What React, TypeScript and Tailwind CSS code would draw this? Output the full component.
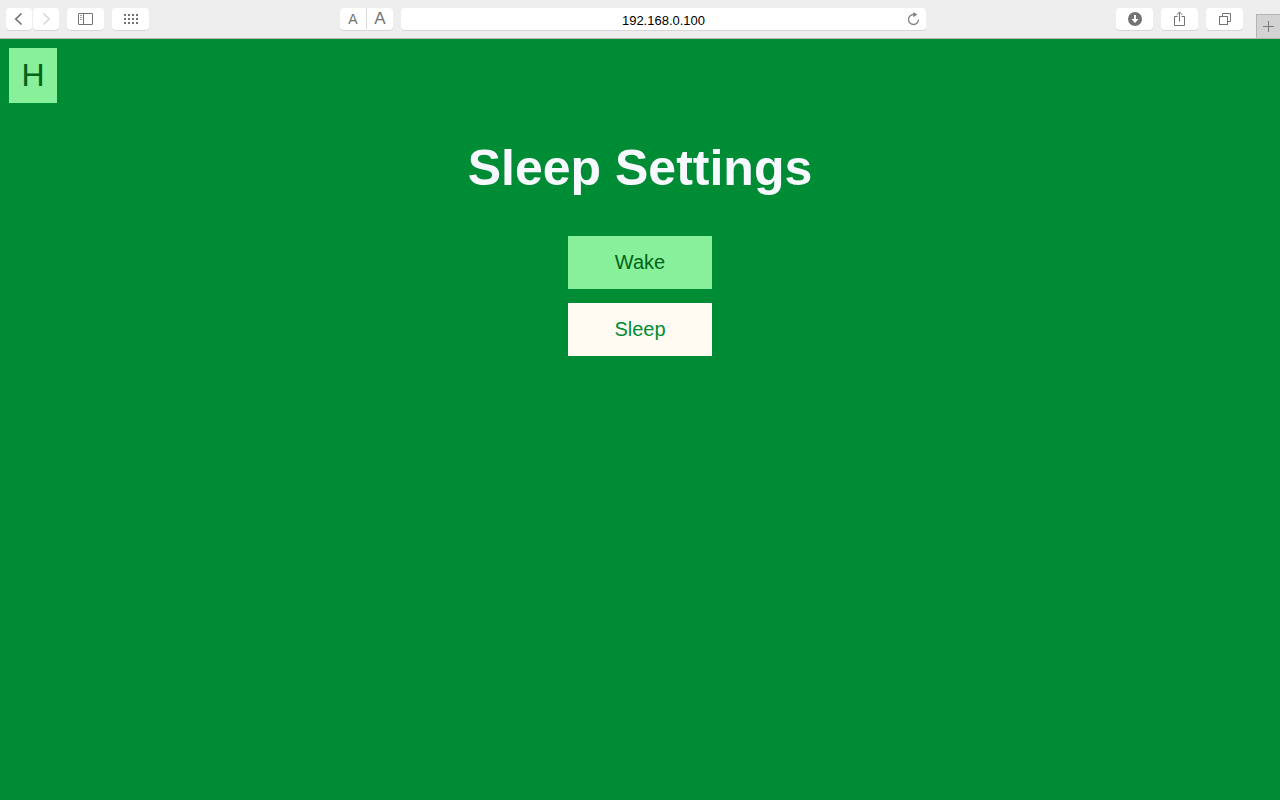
import React, { useState } from 'react'

const toolButton =
  'flex h-[22px] items-center justify-center bg-white text-[#737373] shadow-[0_1px_0_#d6d6d6]'

const Toolbar = () => {
  const [address, setAddress] = useState('192.168.0.100')

  return (
    <header className="grid h-[39px] grid-cols-[340px_1fr_354px] border-b border-[#b4b4b4] bg-[#eeeeee]">
      <div className="flex items-start gap-2 pl-1.5 pt-2">
        <div className="flex gap-px">
          <button aria-label="Back" className={`${toolButton} w-[26px] rounded`}>
            <svg width="26" height="22" viewBox="0 0 26 22" fill="none" stroke="currentColor" strokeWidth="1.7">
              <path d="M15.5 5.5 9.8 11l5.7 5.5" />
            </svg>
          </button>
          <button aria-label="Forward" disabled className={`${toolButton} w-[26px] rounded`}>
            <svg width="26" height="22" viewBox="0 0 26 22" fill="none" stroke="#d9d9d9" strokeWidth="1.7">
              <path d="m10.5 5.5 5.7 5.5-5.7 5.5" />
            </svg>
          </button>
        </div>
        <button aria-label="Show sidebar" className={`${toolButton} w-[37px] rounded`}>
          <svg width="37" height="22" viewBox="0 0 37 22" fill="none" stroke="currentColor">
            <rect x="11.5" y="5.5" width="14" height="11" rx="0.5" />
            <path d="M16.5 5.5v11" />
            <path d="M13 7.5h2M13 9.5h2M13 11.5h2" strokeOpacity="0.7" />
          </svg>
        </button>
        <button aria-label="Top sites" className={`${toolButton} w-[37px] rounded`}>
          <svg width="37" height="22" viewBox="0 0 37 22" fill="none" stroke="currentColor" strokeWidth="2">
            <path d="M12 7h14M12 11h14M12 15h14" strokeDasharray="2 2" />
          </svg>
        </button>
      </div>

      <div className="flex items-start gap-2 pt-2">
        <div className="flex gap-px rounded bg-[#dddddd]">
          <button aria-label="Smaller text" className={`${toolButton} w-[26px] rounded-l text-[14px]`}>
            A
          </button>
          <button aria-label="Larger text" className={`${toolButton} w-[26px] rounded-r text-[17px]`}>
            A
          </button>
        </div>
        <div className="flex h-[22px] flex-1 items-center rounded bg-white pl-[26px] shadow-[0_1px_0_#d6d6d6]">
          <input
            type="text"
            aria-label="Address"
            value={address}
            onChange={(e) => setAddress(e.target.value)}
            className="h-[22px] min-w-0 flex-1 bg-transparent pt-0.5 text-center text-[13px] leading-5 text-black outline-none"
          />
          <button aria-label="Reload" className="h-[22px] w-[26px] text-[#808080]">
            <svg width="26" height="22" viewBox="0 0 26 22" fill="none" stroke="currentColor" strokeWidth="1.3">
              <path d="M15 6.5h-1.5a5 5 0 1 0 5 5" />
              <path d="M13.3 4v5.2l4-2.6z" fill="currentColor" stroke="none" />
            </svg>
          </button>
        </div>
      </div>

      <div className="flex items-start justify-end">
        <div className="mr-[13px] flex gap-2 pt-2">
          <button aria-label="Downloads" className={`${toolButton} w-[37px] rounded`}>
            <svg width="37" height="22" viewBox="0 0 37 22" fill="none">
              <circle cx="19" cy="11" r="7" fill="currentColor" />
              <path d="M18 7h2v4h2.5L19 15l-3.5-4H18z" fill="white" />
            </svg>
          </button>
          <button aria-label="Share" className={`${toolButton} w-[37px] rounded`}>
            <svg width="37" height="22" viewBox="0 0 37 22" fill="none" stroke="currentColor">
              <path d="M16.5 8.5h-3v9h10v-9h-3M18.5 13.5v-9M15.7 6.8l2.8-2.8 2.8 2.8" />
            </svg>
          </button>
          <button aria-label="Show all tabs" className={`${toolButton} w-[37px] rounded`}>
            <svg width="37" height="22" viewBox="0 0 37 22" fill="none" stroke="currentColor">
              <rect x="13.5" y="8.5" width="8" height="8" />
              <path d="M16.5 8V5.5h8v8H22" />
            </svg>
          </button>
        </div>
        <button
          aria-label="New tab"
          className="mt-3.5 h-6 w-6 border-l border-t border-[#b4b4b4] bg-[#d3d3d3] text-[#7b7b7b]"
        >
          <svg width="23" height="23" viewBox="0 0 23 23" fill="none" stroke="currentColor">
            <path d="M6 11.5h11M11.5 6v11" />
          </svg>
        </button>
      </div>
    </header>
  )
}

const App = () => {
  return (
    <div className="flex min-h-screen flex-col bg-[#008c35] font-['Liberation_Sans',Arial,sans-serif]">
      <Toolbar />
      <main className="flex flex-1 flex-col items-start px-[9px] pt-[9px]">
        <a
          href="#home"
          className="flex h-[55px] w-12 items-center justify-center bg-[#88ef9a] pb-0.5 text-[32px] leading-none text-[#006419]"
        >
          H
        </a>
        <div className="flex w-full flex-col items-center pt-9">
          <h1 className="text-[50px] font-bold leading-[58px] text-[#f8f8ff]">Sleep Settings</h1>
          <div className="mt-[39px] flex flex-col gap-3.5">
            <button className="h-[53px] w-36 bg-[#88ef9a] pb-0.5 text-[20px] text-[#006419]">Wake</button>
            <button className="h-[53px] w-36 bg-[#fffaf2] pb-0.5 text-[20px] text-[#008c35]">Sleep</button>
          </div>
        </div>
      </main>
    </div>
  )
}

export default App
